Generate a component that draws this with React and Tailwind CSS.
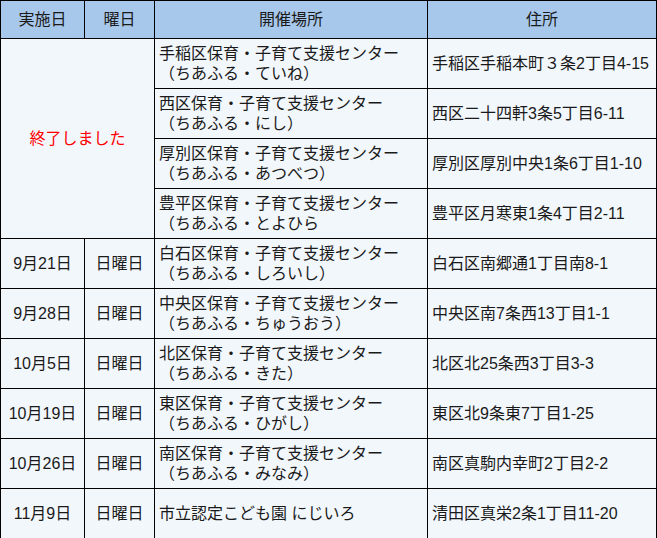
import React from "react";

const done = [
  ["手稲区保育・子育て支援センター", "（ちあふる・ていね）", "手稲区手稲本町３条2丁目4-15"],
  ["西区保育・子育て支援センター", "（ちあふる・にし）", "西区二十四軒3条5丁目6-11"],
  ["厚別区保育・子育て支援センター", "（ちあふる・あつべつ）", "厚別区厚別中央1条6丁目1-10"],
  ["豊平区保育・子育て支援センター", "（ちあふる・とよひら", "豊平区月寒東1条4丁目2-11"],
];

const rows = [
  ["9月21日", "日曜日", "白石区保育・子育て支援センター", "（ちあふる・しろいし）", "白石区南郷通1丁目南8-1"],
  ["9月28日", "日曜日", "中央区保育・子育て支援センター", "（ちあふる・ちゅうおう）", "中央区南7条西13丁目1-1"],
  ["10月5日", "日曜日", "北区保育・子育て支援センター", "（ちあふる・きた）", "北区北25条西3丁目3-3"],
  ["10月19日", "日曜日", "東区保育・子育て支援センター", "（ちあふる・ひがし）", "東区北9条東7丁目1-25"],
  ["10月26日", "日曜日", "南区保育・子育て支援センター", "（ちあふる・みなみ）", "南区真駒内幸町2丁目2-2"],
  ["11月9日", "日曜日", "市立認定こども園 にじいろ", null, "清田区真栄2条1丁目11-20"],
];

const td = "border border-black px-[4px] py-0 align-middle";

export default function App() {
  return (
    <div className="bg-white min-h-screen text-[16px] leading-[20px] text-[#1a1a1a]" style={{ fontFamily: '"Liberation Sans", "Noto Sans CJK JP", sans-serif' }}>
      <table className="border-collapse table-fixed w-[656px] bg-[#f2f7fc]">
        <colgroup>
          <col className="w-[84px]" />
          <col className="w-[70px]" />
          <col className="w-[273px]" />
          <col className="w-[229px]" />
        </colgroup>
        <thead>
          <tr className="h-[38px] bg-[#a8c8eb]">
            <th className={`${td} font-normal text-center`}>実施日</th>
            <th className={`${td} font-normal text-center`}>曜日</th>
            <th className={`${td} font-normal text-center`}>開催場所</th>
            <th className={`${td} font-normal text-center`}>住所</th>
          </tr>
        </thead>
        <tbody>
          {done.map((r, i) => (
            <tr key={i} className="h-[50px]">
              {i === 0 && (
                <td colSpan={2} rowSpan={4} className={`${td} text-center text-[#ff0000]`}>
                  終了しました
                </td>
              )}
              <td className={`${td} text-left whitespace-nowrap`}>
                {r[0]}
                <br />
                {r[1]}
              </td>
              <td className={`${td} text-left whitespace-nowrap`}>{r[2]}</td>
            </tr>
          ))}
          {rows.map((r, i) => (
            <tr key={i} className="h-[50px]">
              <td className={`${td} text-center whitespace-nowrap`}>{r[0]}</td>
              <td className={`${td} text-center whitespace-nowrap`}>{r[1]}</td>
              <td className={`${td} text-left whitespace-nowrap`}>
                {r[2]}
                {r[3] && (
                  <>
                    <br />
                    {r[3]}
                  </>
                )}
              </td>
              <td className={`${td} text-left whitespace-nowrap`}>{r[4]}</td>
            </tr>
          ))}
        </tbody>
      </table>
    </div>
  );
}
